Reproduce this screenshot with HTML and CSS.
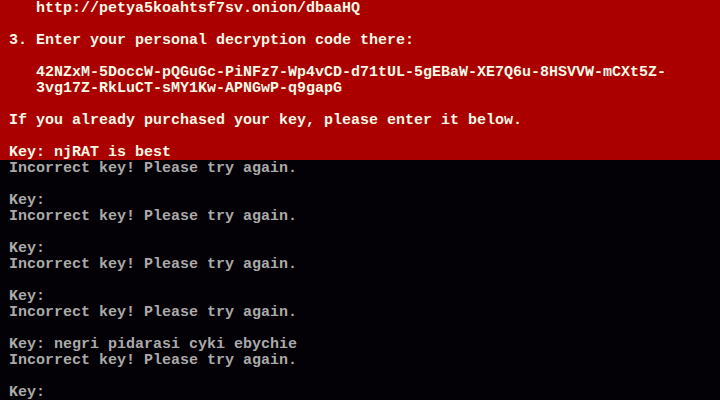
FILE: index.html
```html
<!DOCTYPE html>
<html lang="en">
<head>
    <meta charset="UTF-8">
    <title>Petya</title>
    <link rel="stylesheet" href="styles.css">
</head>
<body>
    <div class="screen">
        <div class="block red">
            <div class="row">    http://petya5koahtsf7sv.onion/dbaaHQ</div>
            <div class="row"> </div>
            <div class="row"> 3. Enter your personal decryption code there:</div>
            <div class="row"> </div>
            <div class="row">    42NZxM-5DoccW-pQGuGc-PiNFz7-Wp4vCD-d71tUL-5gEBaW-XE7Q6u-8HSVVW-mCXt5Z-</div>
            <div class="row">    3vg17Z-RkLuCT-sMY1Kw-APNGwP-q9gapG</div>
            <div class="row"> </div>
            <div class="row"> If you already purchased your key, please enter it below.</div>
            <div class="row"> </div>
            <div class="row"> Key: njRAT is best</div>
        </div>
        <div class="block dark">
            <div class="row"> Incorrect key! Please try again.</div>
            <div class="row"> </div>
            <div class="row"> Key:</div>
            <div class="row"> Incorrect key! Please try again.</div>
            <div class="row"> </div>
            <div class="row"> Key:</div>
            <div class="row"> Incorrect key! Please try again.</div>
            <div class="row"> </div>
            <div class="row"> Key:</div>
            <div class="row"> Incorrect key! Please try again.</div>
            <div class="row"> </div>
            <div class="row"> Key: negri pidarasi cyki ebychie</div>
            <div class="row"> Incorrect key! Please try again.</div>
            <div class="row"> </div>
            <div class="row"> Key:</div>
        </div>
    </div>
</body>
</html>
```

FILE: styles.css
```css
html, body {
    margin: 0;
    padding: 0;
    background-color: #030006;
}
.screen {
    width: 720px;
    height: 400px;
    overflow: hidden;
    font-family: "Liberation Mono", "DejaVu Sans Mono", monospace;
    font-size: 15px;
    font-weight: bold;
}
.block {
    display: flex;
    flex-direction: column;
}
.row {
    height: 16px;
    line-height: 18px;
    white-space: pre;
}
.red {
    background-color: #aa0000;
    color: #fbf8e6;
}
.dark {
    background-color: #030006;
    color: #aaaaaa;
}
```
